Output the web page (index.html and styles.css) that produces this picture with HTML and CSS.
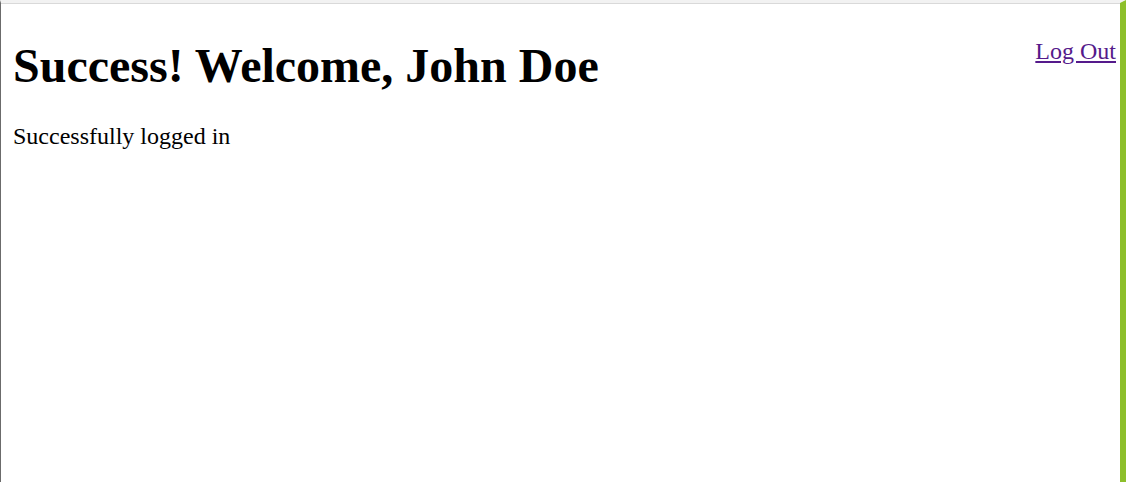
FILE: index.html
```html
<!DOCTYPE html>
<html>
<head>
<meta charset="utf-8">
<link rel="stylesheet" href="styles.css">
</head>
<body>
<div class="frame">
  <div class="page">
    <a class="logout" href="#">Log Out</a>
    <h1 class="title">Success! Welcome, John Doe</h1>
    <p class="msg">Successfully logged in</p>
  </div>
</div>
</body>
</html>
```
FILE: styles.css
```css
html, body {
  margin: 0;
  padding: 0;
  height: 100%;
  background: #fff;
}
.frame {
  box-sizing: border-box;
  height: 482px;
  width: 1126px;
  border-top: 3px solid #f2f2f2;
  border-left: 1px solid #6b6b6b;
  border-right: 6px solid #8dbf2b;
  box-shadow: inset 0 1px 0 #d9d9d9;
  padding-top: 1px;
  overflow: hidden;
}
.page {
  padding: 0 4px 0 12px;
  font-family: "Liberation Serif", "Times New Roman", serif;
  color: #000;
}
.logout {
  float: right;
  font-size: 24px;
  color: #551a8b;
  margin-top: 0;
}
.title {
  font-size: 48px;
  font-weight: bold;
  margin: 34px 0 0;
  line-height: 1.15;
}
.msg {
  font-size: 24px;
  margin: 30px 0 0;
}
```
